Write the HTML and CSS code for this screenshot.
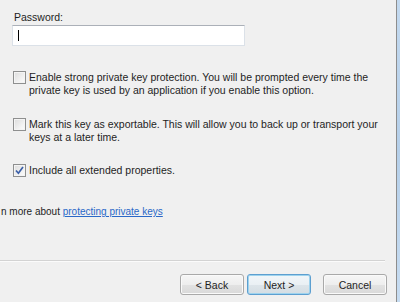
FILE: index.html
```html
<!DOCTYPE html>
<html>
<head>
<meta charset="utf-8">
<link rel="stylesheet" href="styles.css">
</head>
<body>
<div class="window">
  <div class="content">
    <div class="label">Password:</div>
    <div class="textbox"><span class="caret"></span></div>

    <div class="option opt-first">
      <span class="checkbox"></span>
      <span class="opt-text">Enable strong private key protection. You will be prompted every time the<br>private key is used by an application if you enable this option.</span>
    </div>

    <div class="option">
      <span class="checkbox"></span>
      <span class="opt-text">Mark this key as exportable. This will allow you to back up or transport your<br>keys at a later time.</span>
    </div>

    <div class="option opt-last">
      <span class="checkbox checked">
        <svg width="9" height="9" viewBox="0 0 9 9"><path d="M1 4.5 L3.4 7.2 L8 1" fill="none" stroke="#3a5fa8" stroke-width="1.7"/></svg>
      </span>
      <span class="opt-text">Include all extended properties.</span>
    </div>

    <div class="learn">n more about <a class="link" href="#">protecting private keys</a></div>

    <div class="separator"></div>

    <div class="buttons">
      <button class="btn">&lt; Back</button>
      <button class="btn default">Next &gt;</button>
      <button class="btn cancel">Cancel</button>
    </div>
  </div>
  <div class="edge"></div>
  <div class="frame"></div>
</div>
</body>
</html>
```
FILE: styles.css
```css
html, body {
  margin: 0;
  padding: 0;
}
body {
  width: 400px;
  height: 302px;
  overflow: hidden;
  background: #f0f0f0;
  font-family: "Liberation Sans", Arial, sans-serif;
  font-size: 10.5px;
  color: #1e1e1e;
}
.window {
  display: flex;
  height: 302px;
}
.content {
  flex: 1;
  padding-top: 11px;
  overflow: hidden;
}
.edge {
  width: 1px;
  background: #8d8d8d;
}
.frame {
  width: 3px;
  background: linear-gradient(#c3d9ef, #b5cfe9 50%, #c7dcf1);
}
.label {
  margin-left: 14px;
  line-height: 13px;
}
.textbox {
  margin: 1px 0 0 12px;
  width: 231px;
  height: 19px;
  background: #fff;
  border: 1px solid #dbe1e8;
  border-top-color: #abb0b8;
  display: flex;
  align-items: center;
}
.caret {
  display: block;
  width: 1px;
  height: 11px;
  margin-left: 5px;
  background: #000;
}
.option {
  display: flex;
  align-items: flex-start;
  margin-top: 21px;
  line-height: 13px;
}
.opt-first {
  margin-top: 25px;
}
.opt-last {
  margin-top: 20px;
}
.checkbox {
  box-sizing: border-box;
  width: 13px;
  height: 13px;
  margin-left: 13px;
  margin-right: 3px;
  border: 1px solid #8e8f8f;
  background: linear-gradient(135deg, #dcdcdc, #f4f4f4 70%, #fcfcfc);
  box-shadow: inset 0 0 0 1px #f4f4f4;
  display: flex;
  align-items: center;
  justify-content: center;
  flex: none;
}
.opt-text {
  display: block;
}
.learn {
  margin-top: 28px;
  margin-left: 1px;
  line-height: 13px;
  font-size: 10px;
  white-space: nowrap;
}
.link {
  color: #2a68c8;
  text-decoration: underline;
}
.separator {
  margin-top: 42px;
  width: 385px;
  height: 0;
  border-top: 1px solid #d3d3d3;
  border-bottom: 1px solid #fbfbfb;
}
.buttons {
  display: flex;
  justify-content: flex-end;
  padding-right: 9px;
  margin-top: 12px;
  gap: 3px;
}
.btn {
  box-sizing: border-box;
  width: 64px;
  height: 21px;
  padding: 0;
  font-family: "Liberation Sans", Arial, sans-serif;
  font-size: 10.5px;
  color: #1e1e1e;
  border: 1px solid #a9a9a9;
  border-radius: 3px;
  background: linear-gradient(#f6f6f6, #eeeeee 50%, #e2e2e2 52%, #d9d9d9);
  box-shadow: inset 0 0 0 1px #fafafa;
}
.btn.default {
  border-color: #5d9fd0;
  box-shadow: inset 0 0 0 1px #9ed3ee;
  background: linear-gradient(#f1f6f9, #eaf0f4 50%, #dde5ea 52%, #d4dde3);
}
.btn.cancel {
  margin-left: 9px;
}
```
